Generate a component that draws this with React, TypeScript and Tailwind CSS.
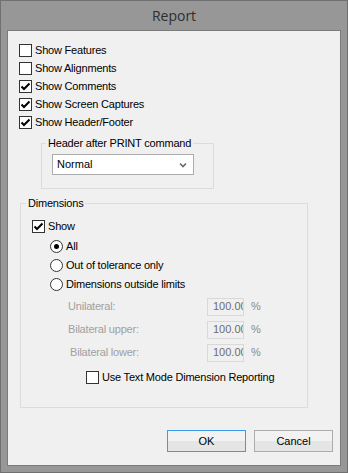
import React from "react";

const font = { fontFamily: '"Liberation Sans", Arial, sans-serif' };

function CheckBox({ checked }: { checked?: boolean }) {
  return (
    <span className="w-[13px] h-[13px] border border-[#333333] bg-white flex items-center justify-center shrink-0">
      {checked && (
        <svg width="11" height="11" viewBox="0 0 11 11">
          <polyline points="1.5,5.5 4,8 9.5,2.5" fill="none" stroke="#000" strokeWidth="2" />
        </svg>
      )}
    </span>
  );
}

function Radio({ checked }: { checked?: boolean }) {
  return (
    <span className="w-[13px] h-[13px] rounded-full border border-[#333333] bg-white flex items-center justify-center shrink-0">
      {checked && <span className="w-[5px] h-[5px] rounded-full bg-black" />}
    </span>
  );
}

function CheckRow({ label, checked, className = "" }: { label: string; checked?: boolean; className?: string }) {
  return (
    <div className={"h-[18px] flex items-center gap-[3px] " + className}>
      <CheckBox checked={checked} />
      <span className="text-[11px] tracking-[-0.2px] text-black leading-none">{label}</span>
    </div>
  );
}

function RadioRow({ label, checked }: { label: string; checked?: boolean }) {
  return (
    <div className="h-[19px] flex items-center gap-[3px] pl-[29px]">
      <Radio checked={checked} />
      <span className="text-[11px] tracking-[-0.2px] text-black leading-none">{label}</span>
    </div>
  );
}

function LimitRow({ label, indent = "" }: { label: string; indent?: string }) {
  return (
    <div className="h-[23px] flex items-center pl-[47px]">
      <span className={"w-[139px] text-[11px] tracking-[-0.2px] text-[#a0a0a0] " + indent}>{label}</span>
      <div className="w-[37px] h-[18px] border border-[#d9d9d9] bg-[#f0f0f0] overflow-hidden flex items-center pl-[5px]">
        <span className="text-[11px] text-[#6d6d6d] whitespace-nowrap">100.00</span>
      </div>
      <span className="ml-[7px] text-[11px] text-[#8a8a8a]">%</span>
    </div>
  );
}

function Button({ label, primary }: { label: string; primary?: boolean }) {
  return (
    <button
      className={
        "w-[79px] h-[22px] border text-[11px] text-black flex items-center justify-center bg-gradient-to-b from-[#f2f2f2] from-50% to-[#e5e5e5] to-50% " +
        (primary ? "border-[#3c9bf0]" : "border-[#acacac]")
      }
    >
      {label}
    </button>
  );
}

export default function App() {
  return (
    <div
      className="w-[348px] h-[473px] bg-[#979797] border border-[#707070] flex flex-col select-none"
      style={font}
    >
      {/* title bar */}
      <div className="h-[29px] flex items-center justify-center">
        <span className="text-[14px] text-[#2e2e2e]" style={{ fontFamily: '"Open Sans", sans-serif' }}>
          Report
        </span>
      </div>

      {/* client area */}
      <div className="flex-1 mx-[6px] mb-[6px] border border-[#7c7c7c] bg-[#f0f0f0] flex flex-col">
        <div className="pt-[10px] pl-[11px]">
          <CheckRow label="Show Features" />
          <CheckRow label="Show Alignments" />
          <CheckRow label="Show Comments" checked />
          <CheckRow label="Show Screen Captures" checked />
          <CheckRow label="Show Header/Footer" checked />
        </div>

        {/* header group */}
        <div className="relative ml-[33px] mt-[12px] w-[173px] h-[46px] border border-[#dcdcdc] pl-[10px] pt-[10px]">
          <span className="absolute left-[4px] top-[-8px] px-[2px] bg-[#f0f0f0] text-[11px] tracking-[-0.2px] leading-[14px] text-black">
            Header after PRINT command
          </span>
          <div className="w-[142px] h-[21px] border border-[#acacac] bg-white flex items-center justify-between pl-[4px] pr-[6px]">
            <span className="text-[11px] text-black">Normal</span>
            <svg width="8" height="6" viewBox="0 0 8 6">
              <polyline points="1,1.5 4,4.5 7,1.5" fill="none" stroke="#6a6a6a" strokeWidth="1.6" />
            </svg>
          </div>
        </div>

        {/* dimensions group */}
        <div className="relative ml-[12px] mt-[14px] w-[288px] h-[205px] border border-[#dcdcdc] pt-[13px]">
          <span className="absolute left-[5px] top-[-8px] px-[2px] bg-[#f0f0f0] text-[11px] tracking-[-0.2px] leading-[14px] text-black">
            Dimensions
          </span>
          <CheckRow label="Show" checked className="pl-[11px]" />
          <div className="mt-[2px]">
            <RadioRow label="All" checked />
            <RadioRow label="Out of tolerance only" />
            <RadioRow label="Dimensions outside limits" />
          </div>
          <div className="mt-[1px]">
            <LimitRow label="Unilateral:" />
            <LimitRow label="Bilateral upper:" />
            <LimitRow label="Bilateral lower:" indent="pl-[2px]" />
          </div>
          <CheckRow label="Use Text Mode Dimension Reporting" className="mt-[4px] pl-[65px]" />
        </div>

        {/* buttons */}
        <div className="mt-auto flex justify-end gap-[8px] pr-[7px] pb-[13px]">
          <Button label="OK" primary />
          <Button label="Cancel" />
        </div>
      </div>
    </div>
  );
}
